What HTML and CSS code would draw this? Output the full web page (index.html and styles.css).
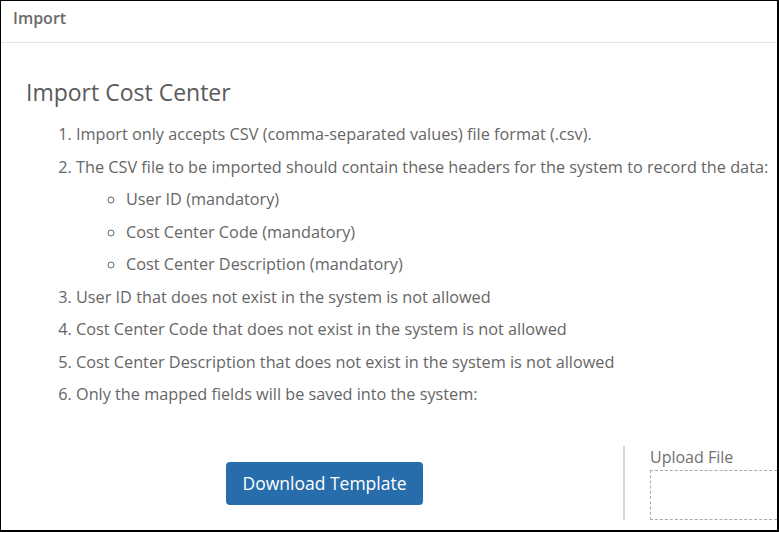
FILE: index.html
```html
<!DOCTYPE html>
<html>
<head>
<meta charset="utf-8">
<link rel="stylesheet" href="styles.css">
</head>
<body>
<div class="frame">
  <div class="header">Import</div>
  <div class="content">
    <h1 class="title">Import Cost Center</h1>
    <ol class="steps">
      <li>Import only accepts CSV (comma-separated values) file format (.csv).</li>
      <li>The CSV file to be imported should contain these headers for the system to record the data:
        <ul class="fields">
          <li>User ID (mandatory)</li>
          <li>Cost Center Code (mandatory)</li>
          <li>Cost Center Description (mandatory)</li>
        </ul>
      </li>
      <li>User ID that does not exist in the system is not allowed</li>
      <li>Cost Center Code that does not exist in the system is not allowed</li>
      <li>Cost Center Description that does not exist in the system is not allowed</li>
      <li>Only the mapped fields will be saved into the system:</li>
    </ol>
    <div class="actions">
      <div class="left">
        <button class="btn">Download Template</button>
      </div>
      <div class="right">
        <div class="label">Upload File</div>
        <div class="drop"></div>
      </div>
    </div>
  </div>
</div>
</body>
</html>
```
FILE: styles.css
```css
html, body {
  margin: 0;
  padding: 0;
  background: #fff;
}
body {
  font-family: "Open Sans", "Noto Sans", sans-serif;
  color: #666;
}
.frame {
  width: 779px;
  height: 532px;
  box-sizing: border-box;
  border: 1px solid #000;
  border-right-width: 2px;
  border-bottom-width: 2px;
  overflow: hidden;
  display: flex;
  flex-direction: column;
}
.header {
  height: 42px;
  flex-shrink: 0;
  box-sizing: border-box;
  border-bottom: 1px solid #e3e3e3;
  padding: 7px 0 0 12px;
  font-size: 16px;
  font-weight: 600;
  color: #6b6b6b;
  line-height: 20px;
}
.content {
  padding: 33px 0 0 25px;
  flex: 1;
  display: flex;
  flex-direction: column;
}
.title {
  margin: 0;
  font-size: 23px;
  font-weight: 500;
  line-height: 32px;
  color: #5a5a5a;
}
.steps {
  margin: 10px 0 0 0;
  padding-left: 50px;
  font-size: 16.25px;
  line-height: 32.5px;
  color: #666;
}
.fields {
  list-style: circle;
  margin: 0;
  padding-left: 50px;
}
.actions {
  display: flex;
  margin-top: 35px;
  height: 74px;
}
.left {
  width: 599px;
  flex-shrink: 0;
  box-sizing: border-box;
  border-right: 2px solid #d6d6d6;
  padding: 16px 0 0 200px;
}
.btn {
  width: 197px;
  height: 43px;
  background: #286dab;
  border: 0;
  border-radius: 4px;
  color: #fff;
  font-family: "Open Sans", "Noto Sans", sans-serif;
  font-size: 17.5px;
  padding: 0;
  line-height: 43px;
}
.right {
  padding-left: 25px;
  flex: 1;
  display: flex;
  flex-direction: column;
}
.label {
  font-size: 16px;
  line-height: 22px;
  color: #707070;
}
.drop {
  margin-top: 2px;
  height: 50px;
  box-sizing: border-box;
  border: 1px dashed #aaa;
  border-right: 0;
}
```
